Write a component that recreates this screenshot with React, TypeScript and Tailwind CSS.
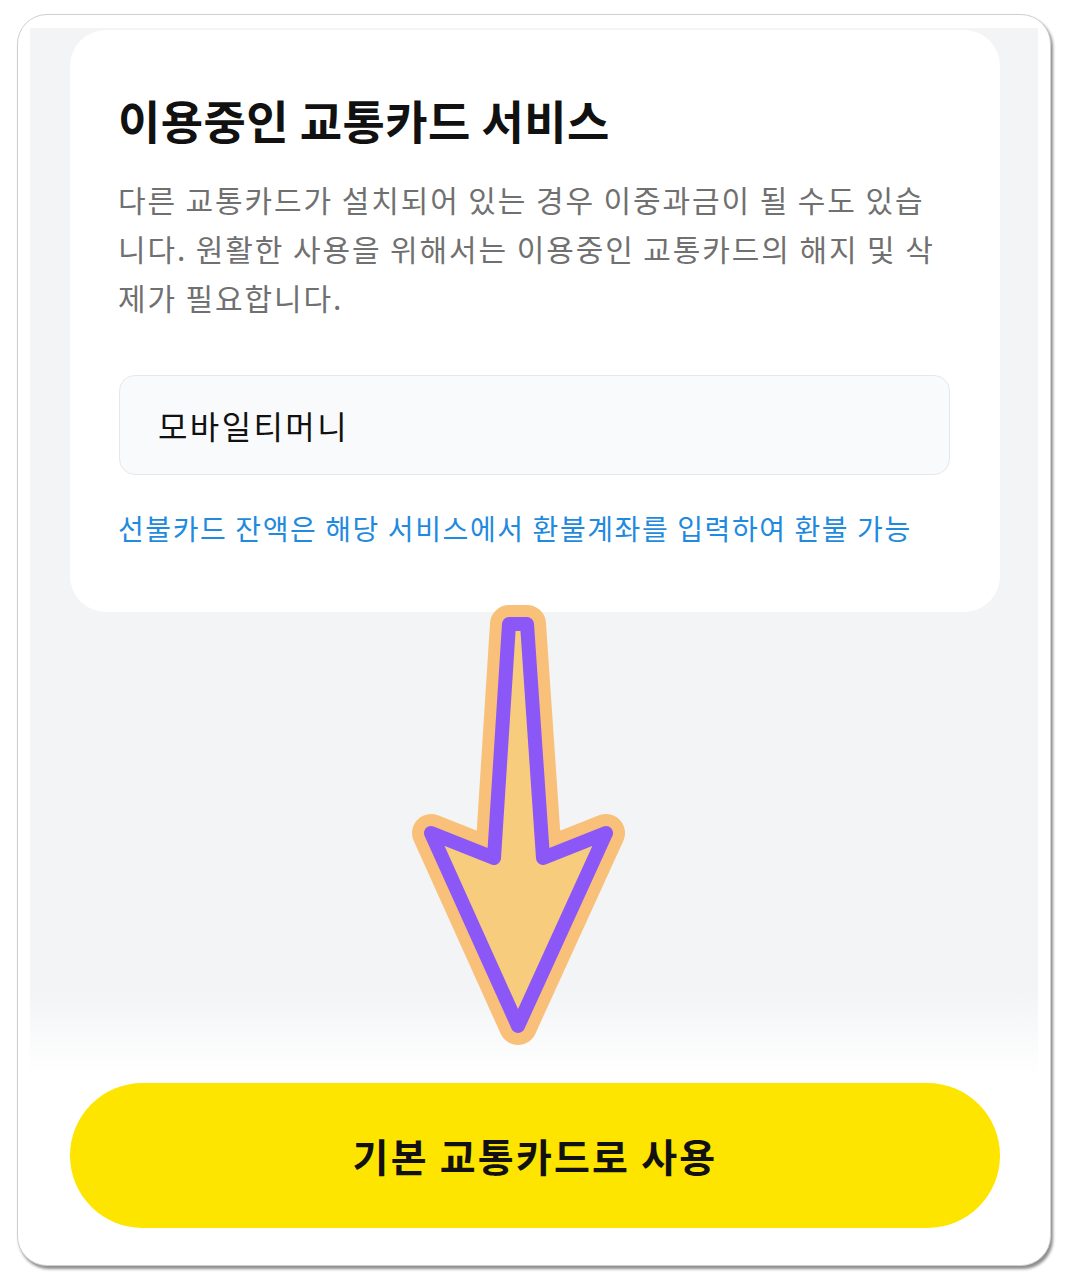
import React from 'react';

const Arrow = () => (
  <svg
    className="absolute left-[400px] top-[590px] pointer-events-none"
    width={240}
    height={470}
    viewBox="400 590 240 470"
  >
    <polygon
      points="509,624 527,624 543,858 606,833 518,1026 431,833 494,858"
      fill="#f7cd7d"
      stroke="#f9c07a"
      strokeWidth={38}
      strokeLinejoin="round"
    />
    <polygon
      points="509,624 527,624 543,858 606,833 518,1026 431,833 494,858"
      fill="#f7cd7d"
      stroke="#8b57f7"
      strokeWidth={14}
      strokeLinejoin="round"
    />
  </svg>
);

export default function App() {
  return (
    <div className="relative w-[1068px] h-[1284px] bg-white pt-[14px] pl-[17px] font-['Noto_Sans_CJK_KR',sans-serif]">
      <div className="flex flex-col w-[1034px] h-[1252px] rounded-[30px] border border-[#cfcfcf] bg-white shadow-[2px_3px_3px_rgba(0,0,0,0.45)] overflow-hidden">
        {/* gray area */}
        <div className="mx-[12px] mt-[13px] h-[1047px] bg-[linear-gradient(to_bottom,#f2f4f6_92%,#ffffff)]">
          <div className="ml-[40px] mt-[2px] w-[930px] rounded-[36px] bg-white pl-[48px] pr-[50px] pt-[59px] pb-[64px]">
            <h1 className="text-[46px] leading-[60px] font-bold text-[#111111] tracking-[0.4px]">
              이용중인 교통카드 서비스
            </h1>
            <p className="mt-[26px] text-[30px] leading-[49px] text-[#707070] tracking-[1.9px] whitespace-nowrap">
              <span className="block">다른 교통카드가 설치되어 있는 경우 이중과금이 될 수도 있습</span>
              <span className="block">니다. 원활한 사용을 위해서는 이용중인 교통카드의 해지 및 삭</span>
              <span className="block">제가 필요합니다.</span>
            </p>
            <div className="mt-[53px] ml-[1px] h-[100px] flex items-center rounded-[16px] border border-[#e5e8eb] bg-[#f9fafb] px-[38px]">
              <span className="text-[32px] text-[#111111] tracking-[2.4px]">모바일티머니</span>
            </div>
            <p className="mt-[33px] text-[28px] leading-[40px] text-[#1f8ade] tracking-[1.6px] whitespace-nowrap">
              선불카드 잔액은 해당 서비스에서 환불계좌를 입력하여 환불 가능
            </p>
          </div>
        </div>
        {/* button */}
        <div className="mt-[8px] ml-[52px] w-[930px] h-[145px] flex items-center justify-center rounded-full bg-[#fee500]">
          <span className="text-[39px] font-bold text-[#111111] tracking-[2.2px]">기본 교통카드로 사용</span>
        </div>
      </div>
      <Arrow />
    </div>
  );
}
